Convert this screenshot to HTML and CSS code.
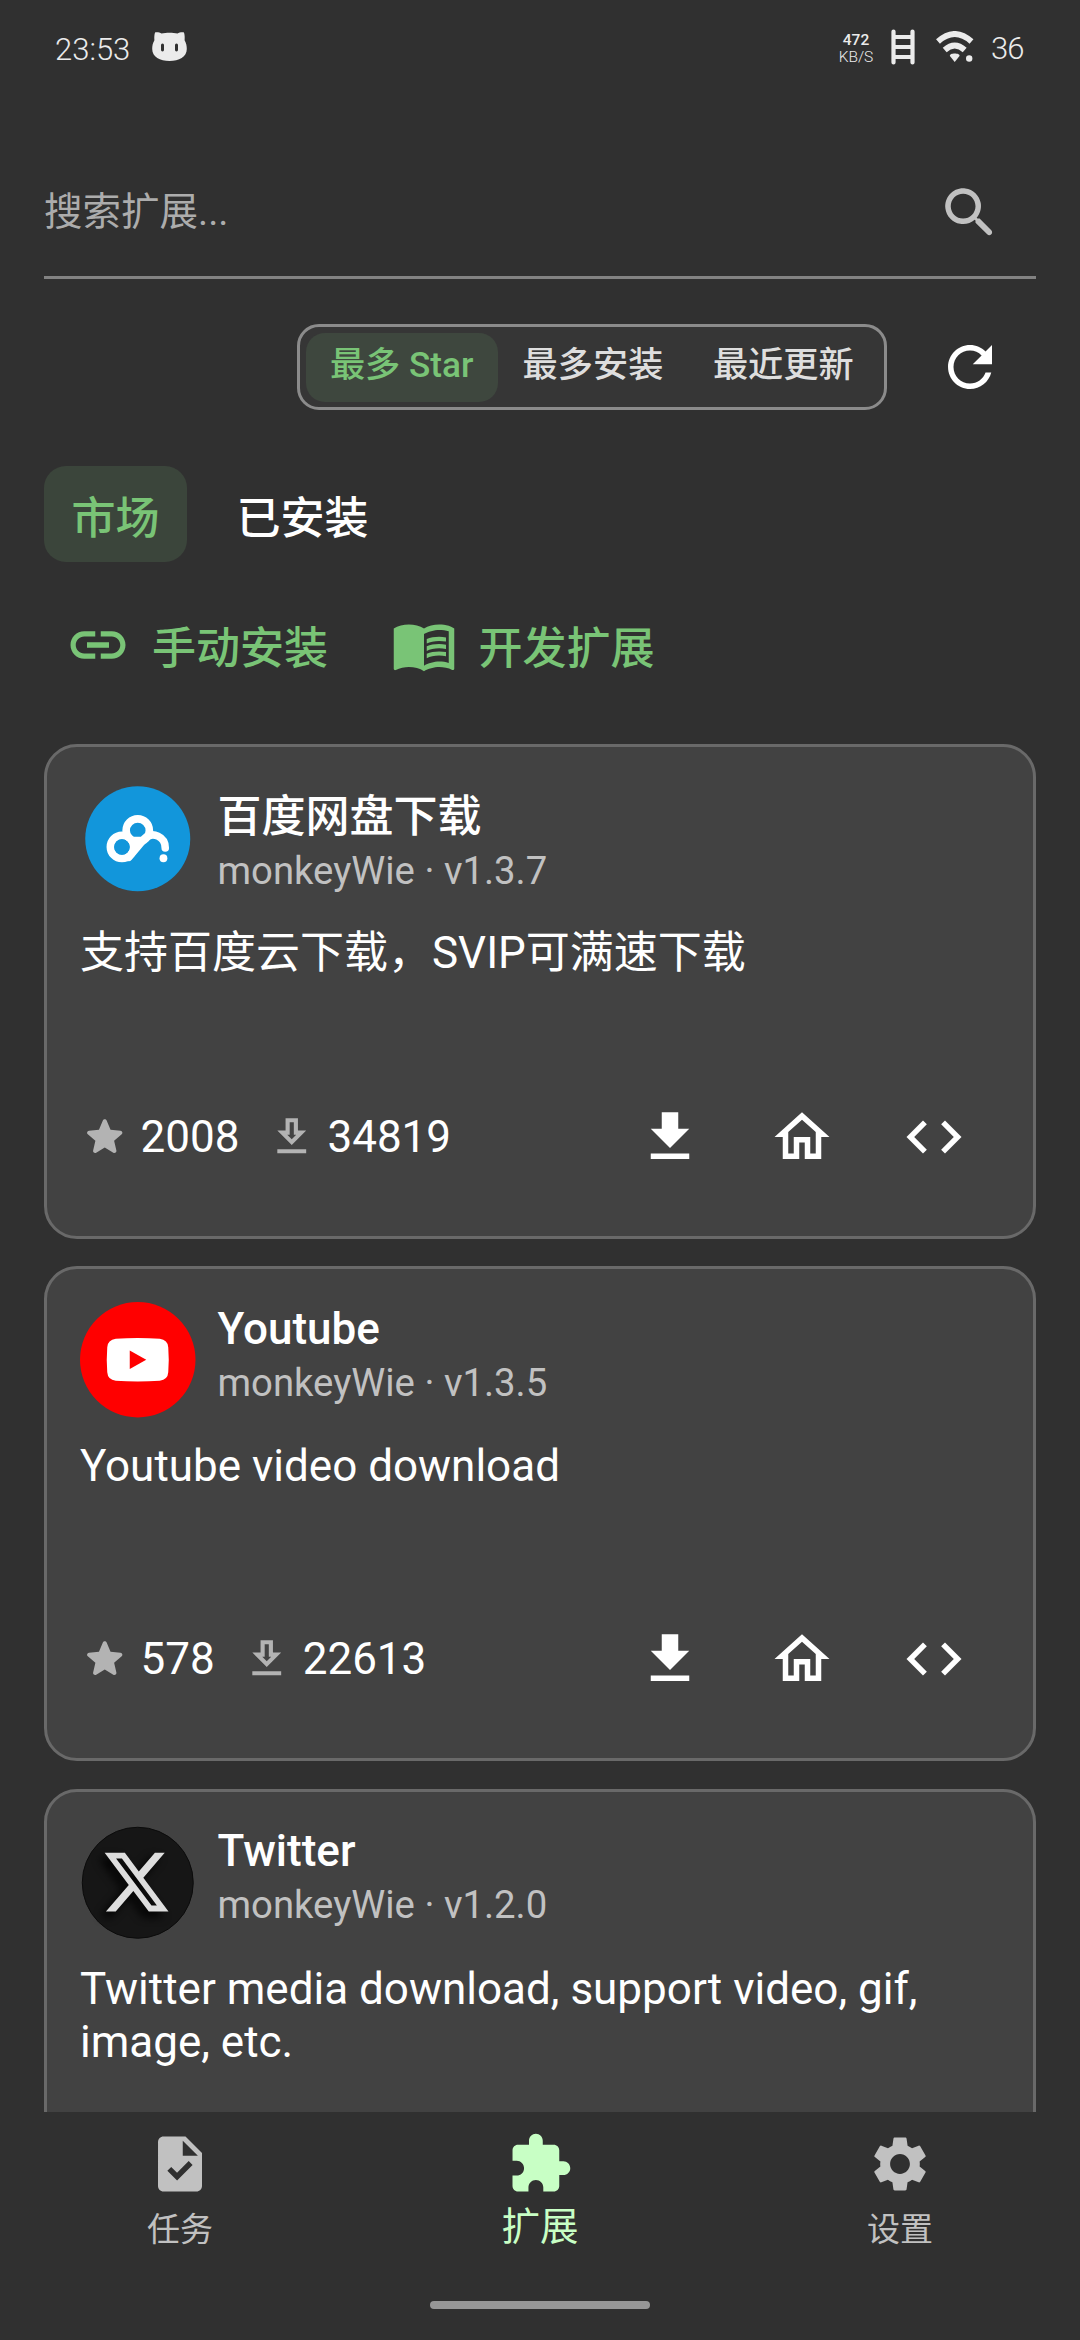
FILE: index.html
```
<!DOCTYPE html>
<html lang="zh-CN">
<head>
<meta charset="utf-8">
<title>扩展</title>
<link rel="stylesheet" href="styles.css">
</head>
<body>
<svg class="defs" width="0" height="0">
  <symbol id="i-star" viewBox="0 0 24 24"><path d="M12 17.27l4.15 2.51c.76.46 1.69-.22 1.49-1.08l-1.1-4.72 3.67-3.18c.67-.58.31-1.68-.57-1.75l-4.83-.41-1.89-4.46c-.34-.81-1.5-.81-1.84 0L9.19 8.63l-4.83.41c-.88.07-1.24 1.17-.57 1.75l3.67 3.18-1.1 4.72c-.2.86.73 1.54 1.49 1.08l4.15-2.5z"/></symbol>
  <symbol id="i-count" viewBox="0 0 24 24"><path fill-rule="evenodd" d="M19 9h-4V3H9v6H5l7 7 7-7zm-8 2V5h2v6h1.17L12 13.17 9.83 11H11zM5 18h14v2H5z"/></symbol>
  <symbol id="i-download" viewBox="0 0 24 24"><path d="M19 9h-4V3H9v6H5l7 7 7-7zM5 18v2h14v-2H5z"/></symbol>
  <symbol id="i-home" viewBox="0 0 24 24"><path d="M12 5.69l5 4.5V18h-2v-6H9v6H7v-7.81l5-4.5M12 3L2 12h3v8h6v-6h2v6h6v-8h3L12 3z"/></symbol>
  <symbol id="i-code" viewBox="0 0 24 24"><path d="M9.4 16.6L4.8 12l4.6-4.6L8 6l-6 6 6 6 1.4-1.4zm5.2 0l4.6-4.6-4.6-4.6L16 6l6 6-6 6-1.4-1.4z"/></symbol>
</svg>

<header class="status">
  <div class="status-left">
    <span class="clock">23:53</span>
    <svg class="cat" viewBox="0 0 35 29"><path fill-rule="evenodd" d="M3 .6C4.400 0 8 .5 9.500 1.500 14 .6 21 .6 25.500 1.500 27 .5 30.600 0 32 .6 32.800 3 32.800 6 32.600 8.200 34.300 11 34.800 14 34.800 17 34.800 25 27 29 17.500 29S.2 25 .2 17C.2 14 .7 11 2.400 8.200 2.200 6 2.200 3 3 .6zM10.500 11.500c-1 0-1.500.8-1.500 2v4c0 1.200.5 2 1.500 2s1.500-.8 1.500-2v-4c0-1.200-.5-2-1.500-2zm14 0c-1 0-1.500.8-1.500 2v4c0 1.200.5 2 1.500 2s1.500-.8 1.500-2v-4c0-1.200-.5-2-1.500-2z"/></svg>
  </div>
  <div class="status-right">
    <div class="speed"><b>472</b><span>KB/S</span></div>
    <svg class="ladder" viewBox="0 0 24 36"><path d="M2.500 2.500v31M21.500 2.500v31M2.500 8h19M2.500 18h19M2.500 28h19" fill="none" stroke="currentColor" stroke-width="4.200" stroke-linecap="round"/></svg>
    <svg class="wifi" viewBox="0 0 38 31"><g fill="none" stroke="currentColor" stroke-width="5.800"><path d="M2 10.500Q18.700-4.500 35.500 10.500"/><path d="M8.700 19Q18.700 10 28.700 19"/></g><path d="M18.700 31l-4.800-6c-.6-3.200 10.200-3.200 9.600 0z"/><circle cx="33.200" cy="27.500" r="3.200"/></svg>
    <span class="battery">36</span>
  </div>
</header>

<main class="page">
  <div class="search">
    <span class="placeholder">搜索扩展...</span>
    <svg class="icon" viewBox="0 0 24 24"><path d="M15.500 14h-.79l-.28-.27c1.200-1.400 1.820-3.310 1.480-5.340-.47-2.780-2.790-5-5.590-5.340-4.230-.52-7.790 3.040-7.270 7.270.34 2.800 2.560 5.120 5.340 5.590 2.030.34 3.940-.28 5.340-1.480l.27.28v.79l4.250 4.250c.41.41 1.080.41 1.490 0 .41-.41.41-1.080 0-1.490L15.500 14zm-6 0C7.010 14 5 11.990 5 9.500S7.010 5 9.500 5 14 7.010 14 9.500 11.990 14 9.500 14z"/></svg>
  </div>

  <div class="filters">
    <div class="segments">
      <span class="segment selected">最多 Star</span>
      <span class="segment">最多安装</span>
      <span class="segment">最近更新</span>
    </div>
    <span class="button"><svg class="icon" viewBox="0 0 24 24"><path d="M17.650 6.350C16.200 4.900 14.210 4 12 4c-4.420 0-7.990 3.580-7.990 8s3.570 8 7.990 8c3.730 0 6.840-2.550 7.730-6h-2.080c-.82 2.330-3.040 4-5.650 4-3.310 0-6-2.690-6-6s2.690-6 6-6c1.660 0 3.140.69 4.220 1.780L13 11h7V4l-2.350 2.350z"/></svg></span>
  </div>

  <nav class="tabs">
    <span class="tab selected">市场</span>
    <span class="tab">已安装</span>
  </nav>

  <div class="links">
    <span class="link"><svg class="icon" viewBox="0 0 24 24"><path d="M3.900 12c0-1.710 1.390-3.100 3.100-3.100h4V7H7c-2.760 0-5 2.240-5 5s2.240 5 5 5h4v-1.900H7c-1.710 0-3.100-1.390-3.100-3.100zM8 13h8v-2H8v2zm9-6h-4v1.900h4c1.710 0 3.100 1.390 3.100 3.100s-1.390 3.100-3.100 3.100h-4V17h4c2.760 0 5-2.240 5-5s-2.240-5-5-5z"/></svg><span>手动安装</span></span>
    <span class="link"><svg class="icon" viewBox="0 0 24 24"><path d="M21 5c-1.110-.35-2.330-.5-3.500-.5-1.950 0-4.050.4-5.500 1.500-1.450-1.100-3.550-1.500-5.500-1.500S2.450 4.900 1 6v14.650c0 .25.25.5.5.5.1 0 .15-.05.25-.05C3.100 20.450 5.050 20 6.500 20c1.950 0 4.050.4 5.500 1.500 1.350-.85 3.800-1.500 5.500-1.500 1.650 0 3.350.3 4.750 1.050.1.050.15.050.25.050.25 0 .5-.25.5-.5V6c-.6-.45-1.250-.75-2-1zm0 13.500c-1.100-.35-2.300-.5-3.500-.5-1.700 0-4.150.65-5.500 1.500V8c1.350-.85 3.800-1.500 5.500-1.500 1.200 0 2.400.15 3.500.5v11.500z"/><path d="M17.500 10.500c.88 0 1.730.09 2.500.26V9.240c-.79-.15-1.640-.24-2.500-.24-1.700 0-3.240.29-4.500.83v1.660c1.130-.64 2.700-.99 4.500-.99zM13 12.490v1.660c1.130-.64 2.700-.99 4.500-.99.88 0 1.730.09 2.500.26V11.900c-.79-.15-1.640-.24-2.500-.24-1.700 0-3.240.3-4.500.83zM17.500 14.330c-1.700 0-3.240.29-4.500.83v1.660c1.130-.64 2.700-.99 4.500-.99.88 0 1.730.09 2.500.26v-1.520c-.79-.16-1.640-.24-2.500-.24z"/></svg><span>开发扩展</span></span>
  </div>

  <section class="cards">
    <article class="card">
      <div class="card-head cjk">
        <svg class="avatar" viewBox="-57.750 -57.750 115.500 115.500"><circle r="52.500" fill="#1296db"/><g fill="none" stroke="#fff" stroke-width="7.600"><circle cx="0" cy="-8.300" r="11.600"/><circle cx="-15.800" cy="8.200" r="11.600"/><path d="M-9 18.500L6.500 0C15-8 27.500-2 27.500 9.200" stroke-linecap="round"/></g><path d="M-6-2L8-2-5 16-10 18-4 10z" fill="#fff"/><circle cx="-15.800" cy="8.200" r="7.700" fill="#1296db"/><circle cx="25.700" cy="19.500" r="3.900" fill="#fff"/></svg>
        <div class="card-title"><h2>百度网盘下载</h2><p>monkeyWie · v1.3.7</p></div>
      </div>
      <p class="desc cjk">支持百度云下载，SVIP可满速下载</p>
      <div class="card-foot">
        <svg class="small"><use href="#i-star"/></svg><span class="num">2008</span>
        <svg class="small"><use href="#i-count"/></svg><span class="num">34819</span>
        <div class="actions">
          <span class="button"><svg class="icon"><use href="#i-download"/></svg></span>
          <span class="button"><svg class="icon"><use href="#i-home"/></svg></span>
          <span class="button"><svg class="icon"><use href="#i-code"/></svg></span>
        </div>
      </div>
    </article>

    <article class="card">
      <div class="card-head">
        <svg class="avatar" viewBox="-57.750 -57.750 115.500 115.500"><circle r="57.750" fill="#f00"/><path d="M-30.500-12.500Q-30-20-22-21 0-22.500 22-21 30-20 30.500-12.500 31.500 0 30.500 12.500 30 20 22 21 0 22.500-22 21-30 20-30.500 12.500-31.500 0-30.500-12.500z" fill="#fff"/><path d="M-8-9.300L8.500 0-8 9.300z" fill="#f00"/></svg>
        <div class="card-title"><h2>Youtube</h2><p>monkeyWie · v1.3.5</p></div>
      </div>
      <p class="desc">Youtube video download</p>
      <div class="card-foot">
        <svg class="small"><use href="#i-star"/></svg><span class="num">578</span>
        <svg class="small"><use href="#i-count"/></svg><span class="num">22613</span>
        <div class="actions">
          <span class="button"><svg class="icon"><use href="#i-download"/></svg></span>
          <span class="button"><svg class="icon"><use href="#i-home"/></svg></span>
          <span class="button"><svg class="icon"><use href="#i-code"/></svg></span>
        </div>
      </div>
    </article>

    <article class="card">
      <div class="card-head">
        <svg class="avatar" viewBox="-57.750 -57.750 115.500 115.500"><circle r="55.500" fill="#161616" stroke="#0b0b0b"/><g transform="translate(-33.100 -33.100) scale(2.660 2.710)"><path class="x-mark" fill="#dedede" d="M18.901 1.153h3.680l-8.040 9.190L24 22.846h-7.406l-5.800-7.584-6.638 7.584H.474l8.600-9.830L0 1.154h7.594l5.243 6.932ZM17.610 20.644h2.039L6.486 3.240H4.298Z"/></g></svg>
        <div class="card-title"><h2>Twitter</h2><p>monkeyWie · v1.2.0</p></div>
      </div>
      <p class="desc">Twitter media download, support video, gif, image, etc.</p>
    </article>
  </section>
</main>

<footer class="bottom">
  <nav class="destinations">
    <span class="dest"><svg class="icon" viewBox="0 0 24 24"><path d="M14 2H6c-1.100 0-1.990.9-1.990 2L4 20c0 1.100.89 2 1.990 2H18c1.100 0 2-.9 2-2V8l-6-6zm-3.060 16L7.400 14.460l1.410-1.410 2.120 2.120 4.240-4.240 1.410 1.410L10.940 18zM13 9V3.500L18.500 9H13z"/></svg><span>任务</span></span>
    <span class="dest active"><svg class="icon" viewBox="0 0 24 24"><path d="M20.500 11H19V7c0-1.100-.9-2-2-2h-4V3.500C13 2.120 11.880 1 10.500 1S8 2.120 8 3.500V5H4c-1.100 0-1.990.9-1.990 2v3.800H3.500c1.490 0 2.700 1.210 2.700 2.700s-1.210 2.700-2.700 2.700H2V20c0 1.100.9 2 2 2h3.800v-1.500c0-1.490 1.210-2.700 2.700-2.700 1.490 0 2.700 1.210 2.700 2.700V22H17c1.100 0 2-.9 2-2v-4h1.500c1.380 0 2.500-1.120 2.500-2.500S21.880 11 20.500 11z"/></svg><span>扩展</span></span>
    <span class="dest"><svg class="icon" viewBox="0 0 24 24"><path d="M19.140 12.940c.04-.3.060-.61.060-.94 0-.32-.02-.64-.07-.94l2.030-1.580c.18-.14.23-.41.12-.61l-1.920-3.320c-.12-.22-.37-.29-.59-.22l-2.390.96c-.5-.38-1.030-.7-1.620-.94l-.36-2.540c-.04-.24-.24-.41-.48-.41h-3.840c-.24 0-.43.17-.47.41l-.36 2.540c-.59.24-1.130.57-1.620.94l-2.390-.96c-.22-.08-.47 0-.59.22L2.740 8.870c-.12.21-.08.47.12.61l2.030 1.580c-.05.3-.09.63-.09.94s.02.64.07.94l-2.030 1.580c-.18.14-.23.41-.12.61l1.920 3.320c.12.22.37.29.59.22l2.390-.96c.5.38 1.030.7 1.620.94l.36 2.540c.05.24.24.41.48.41h3.840c.24 0 .44-.17.47-.41l.36-2.540c.59-.24 1.130-.56 1.620-.94l2.390.96c.22.080.47 0 .59-.22l1.920-3.320c.12-.22.07-.47-.12-.61l-2.010-1.580zM12 15.600c-1.980 0-3.600-1.620-3.600-3.600s1.620-3.600 3.600-3.600 3.600 1.620 3.600 3.600-1.620 3.600-3.600 3.600z"/></svg><span>设置</span></span>
  </nav>
  <div class="gesture"></div>
</footer>
</body>
</html>
```

FILE: styles.css
```
* { box-sizing: border-box; }

body {
  margin: 0;
  width: 1080px;
  height: 2340px;
  overflow: hidden;
  display: flex;
  flex-direction: column;
  background: #303030;
  color: #fff;
  font-family: Roboto, "Noto Sans CJK SC", sans-serif;
  font-size: 44px;
}

h2, p { margin: 0; }
svg { fill: currentColor; display: block; flex: none; }
.defs { display: none; }
.icon { width: 66px; height: 66px; }

/* Status bar */
.status {
  flex: none;
  height: 93px;
  padding: 0 54px 0 55px;
  display: flex;
  justify-content: space-between;
  align-items: center;
  color: #ebebeb;
  font-size: 31px;
  font-weight: 300;
}
.status-left, .status-right { display: flex; align-items: center; }
.clock { width: 97px; padding-top: 6px; }
.cat { width: 35px; height: 29px; }
.speed {
  width: 36px;
  display: flex;
  flex-direction: column;
  align-items: center;
  font-size: 15.5px;
  line-height: 17px;
  padding-top: 4px;
}
.speed b { font-weight: 500; }
.ladder { width: 24px; height: 36px; margin-left: 17px; }
.wifi { width: 38px; height: 31px; margin-left: 21px; }
.battery { width: 52px; padding: 4px 0 0 17px; letter-spacing: -1px; }

/* Search and sorting */
.page {
  flex: 1;
  min-height: 0;
  overflow: hidden;
  padding: 57px 44px 0;
  display: flex;
  flex-direction: column;
}
.search {
  flex: none;
  height: 129px;
  border-bottom: 3px solid #828282;
  padding-right: 33px;
  display: flex;
  align-items: center;
  justify-content: space-between;
  color: #c1c1c1;
}
.placeholder { color: #acacac; font-size: 38.5px; line-height: 46px; padding-bottom: 3px; }

.button { width: 132px; height: 132px; display: flex; align-items: center; justify-content: center; }

.filters {
  flex: none;
  margin-top: 22px;
  display: flex;
  justify-content: flex-end;
  align-items: center;
  gap: 17px;
}
.segments {
  width: 590px;
  height: 86px;
  padding: 5.5px;
  border: 3px solid #8b8b8b;
  border-radius: 22px;
  background: #363636;
  display: flex;
}
.segment {
  width: 191px;
  height: 69px;
  line-height: 65px;
  border-radius: 19px;
  text-align: center;
  color: #dedede;
  font-size: 35.2px;
  font-weight: 500;
  white-space: nowrap;
}
.segment.selected { width: 193px; background: #3e473e; color: #79c476; }

.tabs { flex: none; margin-top: 33px; display: flex; gap: 22px; font-weight: 500; }
.tab { height: 96px; line-height: 107px; padding: 0 27.5px; border-radius: 22px; }
.tab.selected { background: #3b453b; color: #79c476; }

.links { flex: none; margin-top: 50px; padding-left: 20.5px; display: flex; color: #79c476; font-weight: 500; }
.link { display: flex; align-items: center; gap: 21.5px; margin-right: 63px; line-height: 58px; }
.link span { padding-top: 8px; }

/* Extension cards */
.cards { flex: none; margin-top: 65.5px; display: flex; flex-direction: column; gap: 27.5px; }
.card {
  height: 495px;
  padding: 33px;
  border: 3px solid #696969;
  border-radius: 33px;
  background: #424242;
}
.card-head { display: flex; align-items: center; gap: 22px; height: 116px; }
.avatar { width: 115.5px; height: 115.5px; }
.card-title { padding-bottom: 10px; }
.card-title h2 { font-size: 44px; font-weight: 500; line-height: 55px; }
.card-title p { font-size: 38.3px; line-height: 52px; color: #c1c1c1; }
.card-head.cjk { height: 119px; }
.card-head.cjk .card-title { padding: 8px 0 0; }
.desc { height: 211px; padding-top: 22px; line-height: 53px; }
.desc.cjk { height: 208px; padding-top: 28px; }
.card-foot { height: 60px; display: flex; align-items: center; }
.small { width: 49.5px; height: 49.5px; color: #b3b3b3; }
.num { margin: 0 27.5px 0 11px; line-height: 52px; }
.actions { margin-left: auto; display: flex; }
.x-mark { filter: drop-shadow(-2px 2px 1.5px #000); }

/* Bottom navigation */
.bottom { flex: none; height: 228.5px; background: #303030; }
.destinations { display: flex; height: 189px; padding-top: 19px; }
.dest { flex: 1; display: flex; flex-direction: column; align-items: center; color: #c1c1c1; font-size: 33px; }
.dest > span { line-height: 40px; margin-top: 13px; }
.dest.active { color: #c8ffc5; font-size: 38.5px; }
.dest.active > span { margin-top: 10px; }
.gesture { width: 220px; height: 8px; margin: 0 auto; border-radius: 4px; background: #979797; }
```
